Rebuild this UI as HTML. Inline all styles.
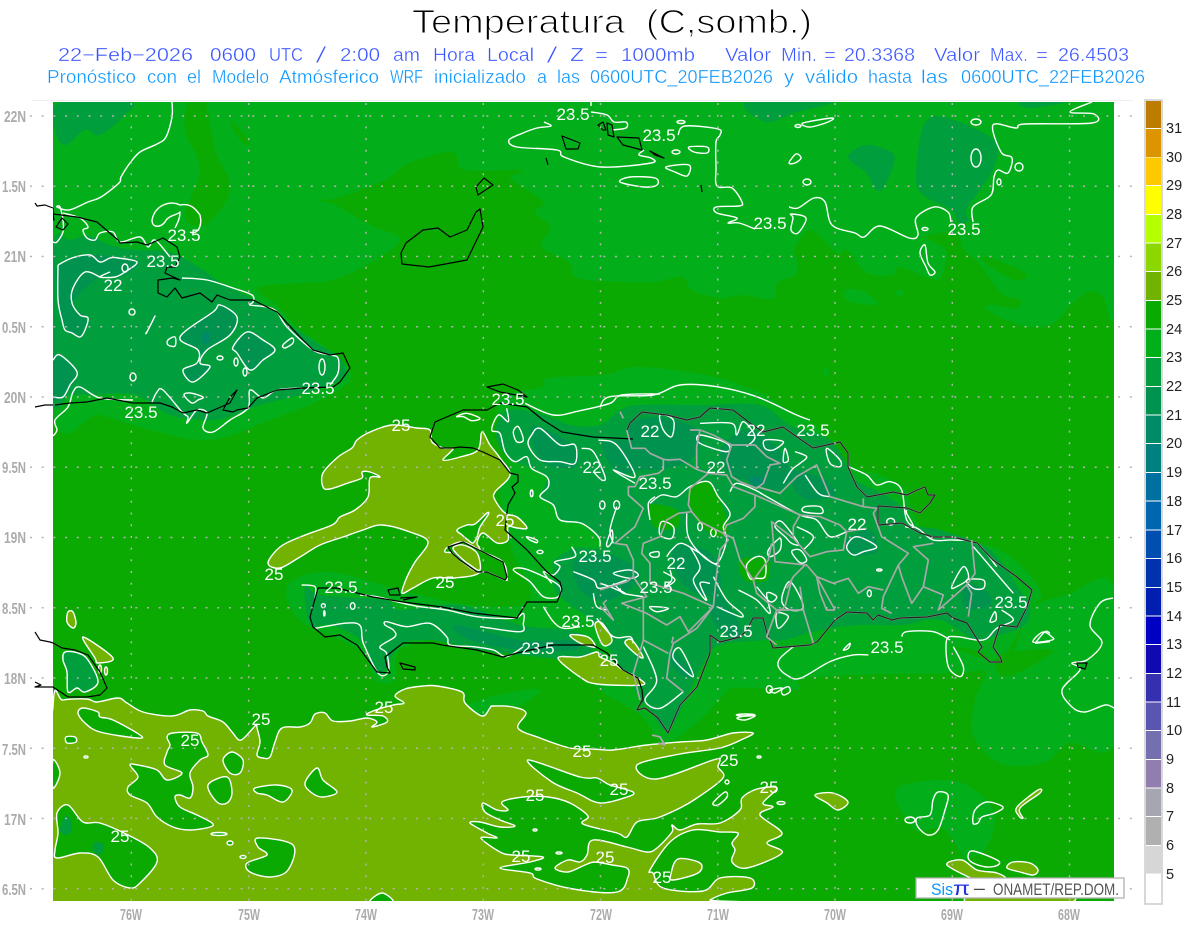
<!DOCTYPE html>
<html><head><meta charset="utf-8"><title>Temperatura</title>
<style>
html,body{margin:0;padding:0;background:#fff}
svg{display:block}
svg *{vector-effect:non-scaling-stroke}
.w{fill:none;stroke:#fff;stroke-width:1.4;stroke-linejoin:round}
.wo{stroke:#fff;stroke-width:1.4;stroke-linejoin:round}
.k{fill:none;stroke:#000;stroke-width:1.2;stroke-linejoin:round}
.g{fill:none;stroke:#a8a8a8;stroke-width:1.7;stroke-linejoin:round}
.ol{fill:#72b200}.gr{fill:#0aaa02}.li{fill:#02af1a}.m{fill:#009e3c}.d{fill:#00934f}.t{fill:#008a68}
.lb text{font:17px "Liberation Sans",sans-serif;fill:#fff;text-anchor:middle}
.ax text{font:bold 16px "Liberation Sans",sans-serif;fill:#ababab}
.cb text{font:14.5px "Liberation Sans",sans-serif;fill:#222}
.s1 text{font:18.5px "Liberation Sans",sans-serif;fill:#3a55ff}
.s2 text{font:18.5px "Liberation Sans",sans-serif;fill:#0a96ff}
</style></head><body>
<svg xmlns="http://www.w3.org/2000/svg" width="1200" height="927" viewBox="0 0 1200 927">
<rect width="1200" height="927" fill="#fff"/>
<!-- titles -->
<g font-family="Liberation Sans,sans-serif" font-size="33" fill="#000" stroke="#fff" stroke-width="1.1">
<text x="412" y="33" textLength="213" lengthAdjust="spacingAndGlyphs">Temperatura</text>
<text x="646" y="33" textLength="166" lengthAdjust="spacingAndGlyphs">(C,somb.)</text>
</g>
<g class="s1" stroke="#fff" stroke-width=".35">
<text x="58" y="61" textLength="135" lengthAdjust="spacingAndGlyphs">22−Feb−2026</text>
<text x="210" y="61" textLength="46" lengthAdjust="spacingAndGlyphs">0600</text>
<text x="269" y="61" textLength="34" lengthAdjust="spacingAndGlyphs">UTC</text>
<text x="315" y="63" textLength="12" lengthAdjust="spacingAndGlyphs" style="font-size:23px" stroke-width=".9">/</text>
<text x="340" y="61" textLength="40" lengthAdjust="spacingAndGlyphs">2:00</text>
<text x="393" y="61" textLength="27" lengthAdjust="spacingAndGlyphs">am</text>
<text x="433" y="61" textLength="42" lengthAdjust="spacingAndGlyphs">Hora</text>
<text x="487" y="61" textLength="47" lengthAdjust="spacingAndGlyphs">Local</text>
<text x="546" y="63" textLength="12" lengthAdjust="spacingAndGlyphs" style="font-size:23px" stroke-width=".9">/</text>
<text x="570" y="61" textLength="14" lengthAdjust="spacingAndGlyphs">Z</text>
<text x="595" y="61" textLength="13" lengthAdjust="spacingAndGlyphs">=</text>
<text x="621" y="61" textLength="74" lengthAdjust="spacingAndGlyphs">1000mb</text>
<text x="725" y="61" textLength="46" lengthAdjust="spacingAndGlyphs">Valor</text>
<text x="781" y="61" textLength="36" lengthAdjust="spacingAndGlyphs">Min.</text>
<text x="824" y="61" textLength="12" lengthAdjust="spacingAndGlyphs">=</text>
<text x="844" y="61" textLength="71" lengthAdjust="spacingAndGlyphs">20.3368</text>
<text x="934" y="61" textLength="46" lengthAdjust="spacingAndGlyphs">Valor</text>
<text x="990" y="61" textLength="38" lengthAdjust="spacingAndGlyphs">Max.</text>
<text x="1036" y="61" textLength="12" lengthAdjust="spacingAndGlyphs">=</text>
<text x="1058" y="61" textLength="71" lengthAdjust="spacingAndGlyphs">26.4503</text>
</g>
<g class="s2" stroke="#fff" stroke-width=".35">
<text x="47" y="83" textLength="89" lengthAdjust="spacingAndGlyphs">Pronóstico</text>
<text x="147" y="83" textLength="30" lengthAdjust="spacingAndGlyphs">con</text>
<text x="187" y="83" textLength="14" lengthAdjust="spacingAndGlyphs">el</text>
<text x="212" y="83" textLength="57" lengthAdjust="spacingAndGlyphs">Modelo</text>
<text x="279" y="83" textLength="100" lengthAdjust="spacingAndGlyphs">Atmósferico</text>
<text x="390" y="83" textLength="33" lengthAdjust="spacingAndGlyphs">WRF</text>
<text x="434" y="83" textLength="92" lengthAdjust="spacingAndGlyphs">inicializado</text>
<text x="537" y="83" textLength="10" lengthAdjust="spacingAndGlyphs">a</text>
<text x="557" y="83" textLength="23" lengthAdjust="spacingAndGlyphs">las</text>
<text x="590" y="83" textLength="183" lengthAdjust="spacingAndGlyphs">0600UTC_20FEB2026</text>
<text x="784" y="83" textLength="10" lengthAdjust="spacingAndGlyphs">y</text>
<text x="805" y="83" textLength="53" lengthAdjust="spacingAndGlyphs">válido</text>
<text x="868" y="83" textLength="44" lengthAdjust="spacingAndGlyphs">hasta</text>
<text x="921" y="83" textLength="27" lengthAdjust="spacingAndGlyphs">las</text>
<text x="961" y="83" textLength="184" lengthAdjust="spacingAndGlyphs">0600UTC_22FEB2026</text>
</g>
<line x1="32" y1="100.5" x2="1133" y2="100.5" stroke="#eee"/>

<svg x="53" y="102" width="1061" height="799" viewBox="53 102 1061 799" overflow="hidden">
<rect x="53" y="102" width="1061" height="799" class="gr"/>
<!-- light north area -->
<polygon class="li" points="53,102 1114,102 1114,310 1102,295 1088,292 1073,303 1051,325 1020,325 987,310 991,305 1016,308 1020,300 1001,293 979,263 964,250 955,233 926,237 946,250 941,277 929,278 900,267 892,275 867,273 847,250 837,253 810,230 794,250 797,260 795,275 777,283 775,297 764,299 744,295 719,298 692,290 682,277 653,282 604,281 575,277 569,262 542,247 550,227 535,213 544,203 532,193 510,178 523,170 465,170 452,152 409,163 385,180 337,198 318,200 335,205 370,225 400,240 370,263 333,280 300,283 257,288 277,305 300,330 340,358 350,380 320,400 270,420 210,440 150,430 100,415 53,410"/>
<polygon class="gr" points="987,257 1026,273 1015,280 985,263"/>
<polygon class="gr" points="189,102 205,102 215,150 230,190 205,225 185,215 200,170 185,130"/>
<polygon class="gr" points="230,120 245,135 250,145 240,140"/>
<polygon class="li" points="845,290 860,290 875,300 875,305 855,303 845,298"/>
<ellipse class="li" cx="900" cy="293" rx="4" ry="3"/>
<ellipse class="li" cx="826" cy="372" rx="3" ry="4"/>
<!-- dark north patches -->
<polygon class="m" points="60,102 130,102 125,115 100,135 85,130 65,145 55,130"/>
<polygon class="m" points="848,157 866,145 891,152 894,163 884,187 876,190 866,173"/>
<polygon class="m" points="916,180 923,127 944,117 994,140 994,167 980,190 966,210 969,220 959,223 951,210 926,197"/>
<polygon class="m" points="746,102 766,122 794,113 830,102"/>
<polygon class="m" points="1020,102 1030,108 1065,102"/>
<!-- Hispaniola halo -->
<polygon class="li" points="505,395 542,387 548,378 604,375 632,367 674,370 719,378 760,393 789,410 815,425 850,465 880,475 905,490 925,530 1000,550 1040,590 1030,610 1000,660 975,650 900,640 800,630 770,650 730,688 700,720 665,742 640,715 600,690 560,650 450,640 400,650 395,680 375,680 360,650 300,620 288,585 330,572 400,590 470,605 530,600 510,545 500,490 510,470 500,440 497,410"/>
<polygon class="li" points="730,688 797,690 800,680 850,675 960,673 985,672 975,700 973,735 1000,763 1043,763 1070,743 1114,742 1114,588 1067,595 1030,610 1000,660 900,630 800,630 720,640 690,700"/>
<polygon class="gr" points="1000,655 1053,650 1020,672 1000,675"/>
<polygon class="li" points="410,735 480,700 540,690 490,720"/>
<polygon class="li" points="896,790 945,780 975,790 995,815 985,850 965,860 975,880 945,830 915,830"/>
<!-- Cuba -->
<polygon class="m" points="53,247 70,240 90,236 110,245 135,250 170,252 200,268 225,285 265,305 290,325 320,345 340,358 345,375 330,385 300,395 260,405 225,418 205,420 170,415 135,395 95,395 70,395 53,400"/>
<polygon class="d" points="58,265 90,255 137,262 120,277 100,277 73,303 87,318 80,337 63,325 58,290"/>
<polygon class="d" points="53,360 60,355 77,372 63,397 53,397"/>
<polygon class="d" points="180,337 213,312 220,305 237,317 230,335 207,350 200,363 210,367 193,382 183,370 197,363 198,350"/>
<polygon class="d" points="233,347 247,332 263,340 275,350 263,360 250,370 237,353"/>
<ellipse class="t" cx="206" cy="338" rx="4" ry="6"/>
<!-- Jamaica -->
<polygon class="m" points="65,652 78,653 88,660 98,682 85,692 77,688 68,692 67,672 63,660"/>
<!-- West Haiti & Hispaniola -->
<polygon class="m" points="305,585 320,595 385,600 400,610 460,605 520,625 570,630 590,640 590,660 570,660 520,655 480,650 430,640 400,645 385,670 375,672 360,640 330,625 310,625"/>
<polygon class="d" points="455,625 520,640 570,640 575,650 520,650 470,640"/>
<polygon class="m" points="508,410 545,415 570,425 600,425 620,410 640,405 700,405 760,405 790,425 830,440 850,470 855,480 885,495 905,510 910,525 940,530 990,550 1020,590 1030,605 1025,625 1000,635 975,640 940,620 900,625 860,625 820,630 785,640 770,640 720,645 705,660 690,690 668,730 650,710 635,690 610,650 590,620 570,605 555,590 553,575 555,560 575,548 600,548 600,537 582,523 560,520 553,505 540,497 547,477 532,468 515,462 505,455 495,432"/>
<polygon class="d" points="530,430 543,428 575,447 575,467 543,462"/>
<polygon class="d" points="603,443 633,443 637,470 615,470"/>
<polygon class="d" points="630,425 665,418 700,432 695,455 680,465 650,470 632,465"/>
<polygon class="d" points="720,450 745,430 770,440 790,470 780,490 745,480 730,475"/>
<polygon class="d" points="790,470 825,480 835,495 810,500 795,490"/>
<polygon class="d" points="845,540 870,530 878,550 865,555 850,555"/>
<polygon class="d" points="672,550 690,545 715,558 720,590 700,595 680,580"/>
<polygon class="d" points="673,650 693,673 685,678 672,665"/>
<polygon class="d" points="575,560 610,555 640,575 610,600 580,590"/>
<polygon class="d" points="715,590 740,625 735,640 712,620"/>
<polygon class="d" points="965,585 985,590 990,605 965,608"/>
<ellipse class="t" cx="757" cy="481" rx="8" ry="5"/>
<polygon class="gr" points="690,487 708,482 720,500 728,530 712,535 690,510"/>
<polygon class="gr" points="650,505 677,510 677,527 655,527"/>
<polygon class="gr" points="740,560 767,560 767,580 745,580"/>

<!-- Olive -->
<polygon class="ol wo" points="53,707 63,700 87,699 97,702 118,698 127,703 143,712 172,716 190,710 203,711 208,716 223,722 232,732 239,740 245,737 256,725 257,728 260,742 257,755 263,758 270,757 275,742 282,728 300,727 310,723 315,714 325,713 333,721 350,721 367,718 377,722 372,727 387,722 383,716 367,715 373,711 393,705 404,703 395,696 405,689 423,686 437,686 462,692 465,703 482,716 490,708 493,706 513,707 526,713 518,728 540,738 570,748 593,749 613,750 647,745 680,742 707,740 733,733 753,733 743,739 720,748 680,754 637,765 656,779 713,760 720,760 718,767 723,778 697,798 680,808 657,818 637,822 627,837 617,833 583,824 588,816 570,803 548,797 523,797 502,802 508,810 497,810 483,803 485,812 500,820 515,826 500,827 480,822 470,823 487,833 497,838 481,838 500,852 513,855 543,857 530,862 500,868 530,873 537,879 573,889 617,892 628,877 627,868 612,865 595,862 585,865 568,872 555,868 568,860 580,862 587,855 593,840 627,847 647,852 657,848 672,832 672,825 680,830 697,824 720,823 740,810 742,798 757,789 777,788 763,803 773,807 760,815 782,833 767,843 782,853 747,868 732,862 735,850 732,843 738,833 720,832 693,830 670,842 650,870 653,873 663,888 703,891 720,878 750,878 752,888 727,893 710,900 710,903 53,903"/>
<!-- holes -->
<g class="gr wo">
<polygon points="78,713 83,708 98,712 100,717 113,720 140,735 137,738 100,732 85,723"/>
<polygon points="66,737 75,737 76,742 67,743"/>
<polygon points="167,737 173,733 197,733 202,742 208,755 200,760 190,773 193,787 190,798 180,795 175,797 180,807 197,815 212,823 210,827 190,830 173,827 157,817 147,803 130,795 128,787 138,777 130,765 138,765 157,770 167,780 182,773 165,765 167,752 170,745"/>
<polygon points="223,760 232,752 243,760 240,773 230,773"/>
<polygon points="208,785 227,777 232,793 227,803 217,802"/>
<polygon points="255,788 277,785 292,790 283,802 267,795 257,793"/>
<polygon points="305,783 317,768 323,780 337,792 323,797 312,793"/>
<polygon points="57,813 68,805 83,822 100,823 128,835 150,848 157,862 140,883 130,888 113,880 98,857 80,853 57,858 55,850 58,833"/>
<polygon points="53,760 60,773 53,788"/>
<polygon points="258,838 293,845 288,870 270,877 250,872 247,863 267,855 258,847"/>
<polygon points="370,902 382,893 393,902"/>
<polygon points="528,760 580,777 597,778 610,785 633,792 627,797 600,803 577,793 552,782"/>
<ellipse cx="219" cy="834" rx="8" ry="1.5"/>
<ellipse cx="230" cy="843" rx="3" ry="2"/>
<ellipse cx="243" cy="857" rx="3" ry="1.5"/>
<ellipse cx="86" cy="757" rx="2" ry="1"/>
</g>
<polygon class="m" points="66,815 72,825 68,835 60,830"/>
<polygon class="m" points="95,842 104,845 100,855 93,850"/>
<polygon class="ol wo" points="678,859 700,863 698,873 673,880 671,874"/>
<polygon class="ol wo" points="815,795 833,793 848,802 838,810 827,803"/>
<polygon class="ol wo" points="947,865 962,860 977,870 997,873 1007,880 1000,890 975,880"/>
<polygon class="ol wo" points="1007,868 1013,862 1030,863 1038,870 1033,875 1020,872"/>
<polygon class="ol wo" points="1017,807 1038,790 1040,793 1020,808 1023,818 1019,816"/>
<polygon class="ol wo" points="970,903 985,890 1060,890 1068,903"/>
<!-- central olive -->
<polygon class="ol wo" points="430,430 417,428 392,425 370,432 357,440 352,448 338,457 323,473 323,487 330,489 348,483 362,478 362,472 370,472 380,477 370,478 368,497 355,510 340,517 332,525 300,537 280,547 268,563 280,568 300,557 320,545 343,537 363,530 382,525 410,532 428,542 415,562 407,577 402,593 413,588 433,578 455,578 480,572 480,550 477,543 483,533 497,543 508,540 508,527 517,528 527,528 517,517 505,513 495,500 495,492 510,475 500,458 490,445 482,432 478,450 460,457 443,460 453,449 443,448 432,442"/>
<polygon class="gr wo" points="457,530 467,525 475,524 487,513 488,515 480,527 477,537 473,543 468,540 462,535"/>
<polygon class="gr wo" points="445,552 452,553 460,560 477,572 487,572 505,580 507,577 503,562 483,552 463,542 448,547"/>
<g class="ol wo">
<polygon points="453,548 463,545 477,553 480,570 470,565 460,557"/>
<polygon points="570,635 588,637 595,647 580,643"/>
<polygon points="595,625 602,623 612,640 603,645"/>
<polygon points="558,658 580,657 597,652 600,657 613,663 623,670 638,678 642,685 597,684 580,677"/>
<polygon points="625,643 632,640 643,657 637,655"/>
<polygon points="68,612 73,612 76,623 73,628 67,622"/>
<polygon points="83,637 113,658 98,663 95,658"/>
<ellipse cx="100" cy="669" rx="1.5" ry="4"/>
<ellipse cx="106" cy="671" rx="1.5" ry="4"/>
</g>

<!-- white contours -->
<g class="w">
<polyline points="172,102 172,117 166,137 157,144 140,152 130,163 121,177 119,183 101,197 88,202 69,210 57,207 60,207 63,220 63,232 57,242 53,242"/>
<polyline points="63,213 80,218 88,227 83,230 87,238 95,240 100,233 113,232 120,242 140,237 148,247 155,240 170,257"/>
<polyline points="182,278 207,280 233,288 252,295 253,302 250,305 267,307 277,312 287,327 313,350 330,355 338,358 338,373 330,385"/>
<polyline points="302,388 277,390 263,398 250,390 248,408 230,420 213,432 203,428 207,413 197,410 187,423 188,417 182,412 163,390 157,392 152,402"/>
<polyline points="133,400 100,398 80,387 73,392 68,407 55,420 57,430 53,436"/>
<path d="M 152,220 C 155,205 170,200 180,205 C 190,203 195,208 200,215 C 203,228 196,235 190,232 M 152,220 C 152,228 160,228 165,222 C 168,215 178,215 180,212 C 180,218 178,222 175,228"/>
<polyline points="58,265 72,258 90,255 100,262 110,258 118,258 137,262 125,272 115,277 100,277 110,272"/>
<polyline points="100,277 85,272 73,288 72,303 80,315 88,318 85,330 80,337 72,333 65,330 62,320 58,300 58,265"/>
<polyline points="53,360 60,355 77,372 70,385 63,397 53,397"/>
<polygon points="180,337 213,312 220,305 237,317 230,335 207,350 200,363 210,367 193,382 183,370 197,363 198,350"/>
<polygon points="233,347 247,332 263,340 275,350 263,360 250,370 237,353"/>
<polygon points="168,340 175,337 175,346 168,345"/>
<polygon points="147,332 155,316 148,330 146,333"/>
<polygon points="184,395 190,393 203,397 198,400 192,403"/>
<ellipse cx="132" cy="312" rx="3" ry="3"/>
<ellipse cx="133" cy="377" rx="3" ry="4"/>
<ellipse cx="125" cy="268" rx="3" ry="4"/>
<polygon points="283,345 292,338 293,343 285,348"/>
<ellipse cx="322" cy="367" rx="3" ry="8"/>
<ellipse cx="236" cy="362" rx="2" ry="4"/>
<ellipse cx="245" cy="372" rx="2" ry="4"/>
<ellipse cx="220" cy="358" rx="3" ry="2"/>
<polygon points="65,652 78,653 88,660 98,682 85,692 77,688 68,692 67,672 63,660"/>
<polyline points="591,102 591,106"/>
<polyline points="591,112 607,115 614,122 626,122 626,128 612,130"/>
<polyline points="544,122 551,126 537,128 523,133 509,140 517,147 557,150 564,157 601,167 651,163 651,158 639,155 644,150"/>
<polygon points="666,167 689,165 687,176 675,172"/>
<polygon points="689,147 707,147 707,153 694,152"/>
<ellipse cx="676" cy="152" rx="4" ry="2"/>
<polygon points="620,182 630,177 655,178 657,185 644,187"/>
<ellipse cx="681" cy="122" rx="4" ry="1.5"/>
<polyline points="678,135 685,126 718,129 720,135 716,142 716,167 717,186 732,188 742,202 739,206 716,207 717,213 737,218 728,223 739,223 755,229"/>
<polygon points="791,214 806,218 798,233 791,230 793,218"/>
<polyline points="789,207 798,208 814,198 825,202 832,225 855,233 864,237 880,226 909,238 918,235 916,218 934,207 948,212 951,222"/>
<polyline points="973,222 973,207 991,195 994,177 998,170 1008,173 1012,158 1001,152 993,125 1016,128 1025,124 1092,123 1094,114 1070,112 1092,102"/>
<circle cx="1019" cy="167" r="4"/>
<polygon points="795,163 801,158 796,154 789,163"/>
<ellipse cx="807" cy="182" rx="4" ry="3"/>
<polygon points="803,123 832,118 828,122 810,127"/>
<ellipse cx="798" cy="126" rx="3" ry="1.5"/>
<ellipse cx="976" cy="158" rx="5" ry="9"/>
<ellipse cx="976" cy="122" rx="5" ry="3"/>
<ellipse cx="999" cy="182" rx="2" ry="3"/>
<ellipse cx="925" cy="229" rx="3" ry="1.5"/>
<polygon points="925,245 928,263 935,272 930,275 926,267 920,253"/>
<polyline points="1113,598 1100,603 1090,625 1102,643 1087,660 1072,663 1080,670 1062,690 1072,707 1085,712 1105,705 1114,708"/>
<polygon points="1033,642 1043,632 1052,637 1052,640"/>
<polygon points="933,800 938,792 948,795 945,810 938,830 928,835 918,827 917,818 930,815"/>
<ellipse cx="910" cy="820" rx="5" ry="3"/>
<polygon points="975,810 987,802 1003,807 995,813 982,817 978,823 973,823"/>
<polygon points="968,857 973,851 997,860 998,865 987,867 973,863"/>
<ellipse cx="727" cy="782" rx="2" ry="2"/>
<polygon points="713,803 725,792 727,797 718,805"/>
<ellipse cx="781" cy="803" rx="4" ry="1.5"/>
<ellipse cx="759" cy="757" rx="2" ry="1"/>
<ellipse cx="535" cy="830" rx="2" ry="1"/>
<ellipse cx="559" cy="853" rx="3" ry="1"/>
<ellipse cx="538" cy="869" rx="3" ry="1"/>
<polygon points="737,718 750,715 755,716 745,720"/>
<polygon points="770,690 782,688 775,693"/>
</g>
<g transform="translate(260,380) scale(.33333)" class="w">
<polyline points="795,70 880,105 960,92 1050,70 1085,45 1200,42"/>
<polygon points="590,110 620,100 660,115 635,122 610,110"/>
<polyline points="740,85 745,125 715,105 695,150 720,160 735,215 765,245 800,230 815,265 860,290 865,320 840,350 880,375 900,420 965,430 1015,470 1020,500"/>
<polygon points="775,140 790,180 770,185 760,155"/>
<polygon points="815,165 840,145 900,195 945,195 945,250 900,245 840,240 805,195"/>
<polyline points="965,205 1000,215 1035,290 1025,300 1000,275"/>
<polyline points="1015,180 1070,195 1125,290 1060,270 1125,310"/>
<ellipse cx="815" cy="340" rx="4" ry="10"/>
<ellipse cx="1027" cy="375" rx="8" ry="12"/>
<ellipse cx="1070" cy="375" rx="9" ry="13"/>
<polygon points="800,470 830,480 830,488 810,480"/>
<ellipse cx="840" cy="516" rx="9" ry="5"/>
<polygon points="1040,490 1055,450 1058,480 1045,500"/>
<polyline points="935,500 945,530 885,545 900,560 880,585 850,575 875,610"/>
<polyline points="940,575 1000,600 1020,625 1100,600"/>
<polygon points="760,570 800,568 895,615 895,650 850,650 810,605"/>
<polyline points="850,680 880,725 910,745 960,740"/>
<polyline points="125,615 165,620 165,655"/>
<polyline points="165,745 290,730 310,790 355,880 385,875 380,820 360,800 405,770 400,750 375,735 380,725 440,740 510,730 560,770 570,795 640,800 700,810 740,830 790,800"/>
<polyline points="660,740 780,755 790,730 790,700 760,715 650,710 560,690 480,680 430,670 350,650 300,645"/>
<polyline points="1010,715 1060,770 1110,770 1120,790"/>
<polyline points="1040,690 1010,680 1000,640"/>
<ellipse cx="278" cy="678" rx="7" ry="10"/>
<circle cx="190" cy="677" r="6"/>
<ellipse cx="193" cy="700" rx="2" ry="8"/>
<polygon points="1060,580 1110,570 1135,585 1110,595"/>
</g>
<g transform="translate(600,380) scale(.33333)" class="w">
<polygon points="180,105 220,120 215,170 190,150"/>
<polyline points="300,130 395,130 410,165 430,125 465,170 440,200"/>
<polygon points="300,165 380,190 380,215 300,190"/>
<polygon points="495,180 550,185 520,210 495,205"/>
<polygon points="555,205 565,240 550,245"/>
<polygon points="680,205 720,240 720,260 690,250"/>
<polyline points="615,285 655,340 690,350"/>
<polygon points="615,380 660,380 665,400 610,395"/>
<polyline points="585,215 620,230 600,250 575,270 550,310"/>
<polyline points="390,335 410,310 465,330 500,350 600,405 650,420 690,470 740,455"/>
<polyline points="150,370 185,345 230,350 270,320 325,305 355,350 390,400 370,440 380,480 350,550 300,520 245,490 215,510 200,530"/>
<polygon points="185,425 220,440 215,475 180,465"/>
<polyline points="150,420 145,370 165,350"/>
<polyline points="260,400 265,470 310,530 360,560"/>
<ellipse cx="300" cy="440" rx="7" ry="12"/>
<ellipse cx="340" cy="458" rx="8" ry="12"/>
<polygon points="525,440 545,425 595,490 575,490 555,470"/>
<polygon points="505,510 540,475 540,510 510,530"/>
<polygon points="575,515 600,510 620,540 600,548"/>
<polyline points="590,440 640,470 610,510"/>
<polygon points="440,555 470,530 495,540 495,590 470,595 450,595"/>
<polyline points="415,630 470,660 510,700 500,640 530,650 510,665 470,620"/>
<polygon points="545,660 570,605 610,680 570,690"/>
<polygon points="530,700 565,710 535,745"/>
<polygon points="740,500 770,470 830,500 790,515 760,525"/>
<polygon points="150,520 175,515 175,530 155,530"/>
<polyline points="190,575 225,600 190,625 215,600 210,570"/>
<polyline points="270,500 300,560 280,600 300,640 320,660 300,610 330,610"/>
<polyline points="340,590 380,660 425,700 420,710 350,680"/>
<polyline points="60,625 70,640 130,650"/>
<polygon points="150,680 205,685 170,695"/>
<polyline points="0,610 30,620 75,640 60,630 40,610"/>
<polyline points="130,800 170,900 135,960 180,985 250,935"/>
<polygon points="220,835 240,805 280,890"/>
<polyline points="50,380 30,450 40,490"/>
<ellipse cx="808" cy="640" rx="6" ry="10"/>
<ellipse cx="838" cy="570" rx="8" ry="3"/>
<polygon points="1055,620 1090,560 1105,595 1070,620"/>
<polygon points="1100,600 1150,600 1150,625 1120,625"/>
<polyline points="1240,640 1180,570 1120,500"/>
<polyline points="1205,690 1240,720 1190,745 1150,780 1070,770 1040,780 1045,860 1080,890 1090,860 1060,800"/>
<polygon points="1170,725 1185,695 1188,720"/>
<polygon points="730,810 750,790 745,805"/>
<polyline points="805,825 760,825 690,845 600,895 560,885 535,860 540,835 580,800"/>
<polyline points="905,770 920,755 1000,755 1050,780"/>
<polyline points="915,440 940,440 920,400 920,390"/>
<ellipse cx="872" cy="425" rx="12" ry="10"/>
<ellipse cx="508" cy="928" rx="9" ry="11"/>
<polygon points="545,930 565,920 570,935 550,945"/>
<ellipse cx="437" cy="1005" rx="28" ry="3"/>
<polyline points="745,260 800,285 830,315 870,305 905,330 920,420 960,450 1000,480 1060,480 1130,490 1190,560"/>
<polyline points="0,80 30,50 160,45 240,15 350,20 470,50 590,105 630,120"/>
<polyline points="1305,790 1335,755 1350,760"/>
<polyline points="1305,790 1350,785"/>
</g>

<!-- coast -->
<g class="k">
<polyline points="53,208 53,214 77,217 97,222 118,240 120,243 137,242 147,245 163,238 177,247 180,257 175,267 167,267 165,273 180,280 173,278 158,280 158,293 167,297 175,288 182,298 200,293 212,302 217,295 230,300 253,300 263,305 277,312 287,323 300,337 313,350 330,355 343,353 350,368 340,382 333,387 303,388 277,390 257,398 248,408 237,410 233,412 223,410 230,397 237,390 230,403 207,413 197,410 183,413 172,407 160,403 133,403 107,398 87,402 70,403 55,405"/>
<polygon points="53,214 48,215 54,220"/>
<polygon points="62,218 68,224 63,230 56,227"/>
<polygon points="480,209 483,227 467,260 429,267 402,264 401,253 406,243 423,230 438,228 450,237 467,230 476,212"/>
<polygon points="484,178 493,185 478,195 476,187"/>
<polygon points="562,136 580,143 578,149 566,149"/>
<line x1="546" y1="158" x2="548" y2="165"/>
<polygon points="598,125 603,122 606,130 603,130"/>
<polygon points="607,123 612,125 614,137 608,135"/>
<polygon points="617,137 639,138 642,150 623,145"/>
<polygon points="650,151 664,158 655,155"/>
<line x1="701" y1="185" x2="702" y2="192"/>
<polygon points="1077,663 1087,663 1085,669 1078,667"/>
<polyline points="53,643 62,648 75,650 88,655 100,672 107,688 100,695 87,697 68,697 53,687"/>
<polygon points="487,387 503,384 518,390 527,397 500,392"/>
<polygon points="448,547 463,542 483,552 503,562 507,577 505,580 487,572 477,572 460,560 452,553"/>
<polygon points="400,663 415,667 415,670 403,669"/>
<polygon points="388,590 398,588 400,595 390,595"/>
<polyline points="400,598 417,597 403,600"/>
<polyline points="310,617 318,588 337,588 373,597 403,602 442,607 473,613 517,618 527,602 557,602 562,590 560,582 547,572 527,550 505,530 508,505 515,493 512,487 518,482 518,475 510,473 500,460 483,452 473,448 460,447 453,448 440,448 430,437 435,422 463,410 487,410 500,403 527,407 543,420 562,432 593,437 633,439"/>
<polyline points="310,617 313,627 325,637 340,635 357,645 377,672 390,673 387,667 385,657 403,643 433,643 442,645 477,650 503,657 517,653 553,645 593,645 607,653 623,670 638,678 642,690 643,700 637,710"/>
</g>
<polyline class="g" points="627,430 630,423 642,412 667,415 687,420 700,417 710,408 733,410 750,423 763,432 783,427 797,437 813,448 827,445 840,442 848,453 848,467 857,487 867,497 893,492 907,495 917,490 925,487 928,495 935,495 930,503 920,513 907,508 878,506 878,525 902,523 920,533 933,537 953,537 977,543 993,560 1017,577 1032,590 1027,607 1017,627 1000,625 993,647 1000,657 1002,662 990,662 978,652 982,647 967,623 953,618 947,613 927,617 900,618 892,620 878,615 873,620 867,613 847,612 835,620 817,642 810,645 773,648 770,640 767,633 763,618 753,618 747,630 740,637 720,642 710,635 710,653 697,687 680,705 668,733 658,718 645,708 637,710 642,700"/>
<polyline class="k" stroke-opacity=".8" points="627,430 630,423 642,412 667,415 687,420 700,417 710,408 733,410 750,423 763,432 783,427 797,437 813,448 827,445 840,442 848,453 848,467 857,487 867,497 893,492 907,495 917,490 925,487 928,495 935,495 930,503 920,513 907,508 878,506 878,525 902,523 920,533 933,537 953,537 977,543 993,560 1017,577 1032,590 1027,607 1017,627 1000,625 993,647 1000,657 1002,662 990,662 978,652 982,647 967,623 953,618 947,613 927,617 900,618 892,620 878,615 873,620 867,613 847,612 835,620 817,642 810,645 773,648 770,640 767,633 763,618 753,618 747,630 740,637 720,642 710,635 710,653 697,687 680,705 668,733 658,718 645,708 637,710 642,700"/>
<polyline class="g" points="652,735 660,737 665,745 658,743"/>
<!-- province borders -->
<g transform="translate(600,380) scale(.33333)" class="g">
<polyline points="80,150 95,205 135,205 150,220 190,238 205,240 240,238 290,268 290,200 300,150"/>
<polyline points="190,238 190,268 175,280 120,290 105,320 85,320 85,345 130,385 105,440 45,490 80,495 100,540 100,590 80,605 0,630"/>
<polyline points="270,150 300,150 340,165 395,195 380,240 395,290 420,305 470,325 490,310 510,255 540,250 500,230 465,195 395,195"/>
<polyline points="290,268 325,280 380,285 400,320 465,345 465,380 430,415 380,435 370,460 300,425 275,395 235,400 200,420 180,470 130,490 125,520 150,550 150,610"/>
<polyline points="325,280 270,325 265,375 275,395"/>
<polyline points="465,345 600,405 660,410 720,435 740,455 730,510 680,515 630,530 580,475 515,425 525,545 620,555 650,590 705,690"/>
<polyline points="600,405 580,440 580,475"/>
<polyline points="470,320 540,340 590,290 650,255 690,350 790,380 830,385 820,400 845,470 925,520 895,555 850,650 845,685 875,700"/>
<polyline points="790,380 790,355"/>
<polyline points="740,455 800,445"/>
<polyline points="895,555 905,590 935,670 970,620 985,540 940,500 1000,490"/>
<polyline points="615,555 580,590 560,625"/>
<polyline points="650,590 660,640 680,690 705,690"/>
<polyline points="650,590 700,610 745,595 775,640 805,620 850,630"/>
<polyline points="970,620 1030,645 1015,690 1100,615 1115,640 1105,710"/>
<polyline points="1115,480 1125,580 1100,615"/>
<polyline points="370,460 400,475 420,540 460,600 470,640 530,690 500,770 530,795"/>
<polyline points="350,580 360,510 385,480 370,460"/>
<polyline points="350,580 340,680 290,745 220,790 210,820 200,895 250,935"/>
<polyline points="340,680 250,640 150,610"/>
<polyline points="100,590 140,650 65,670 140,700 200,735 240,710 265,755 340,680"/>
<polyline points="130,780 205,820"/>
<polyline points="220,770 215,790"/>
<polyline points="515,490 505,540 460,600"/>
<polyline points="530,690 610,690 640,790"/>
<polyline points="575,600 555,680 530,700"/>
<polyline points="600,620 610,690"/>
<polyline points="60,95 70,115"/>
<polyline points="20,660 10,670 40,720 0,680"/>
<polyline points="130,650 130,780 100,880 120,960"/>
</g>

<!-- labels -->
<g class="lb">
<text x="573" y="120">23.5</text><text x="659" y="141">23.5</text><text x="770" y="229">23.5</text><text x="964" y="235">23.5</text><text x="184" y="241">23.5</text><text x="163" y="267">23.5</text><text x="318" y="394">23.5</text><text x="141" y="418">23.5</text><text x="508" y="405">23.5</text><text x="813" y="436">23.5</text><text x="655" y="489">23.5</text><text x="595" y="562">23.5</text><text x="656" y="593">23.5</text><text x="341" y="593">23.5</text><text x="578" y="627">23.5</text><text x="538" y="654">23.5</text><text x="736" y="637">23.5</text><text x="887" y="653">23.5</text><text x="1011" y="608">23.5</text>
<text x="113" y="291">22</text><text x="650" y="437">22</text><text x="756" y="436">22</text><text x="592" y="473">22</text><text x="716" y="473">22</text><text x="857" y="530">22</text><text x="676" y="569">22</text>
<text x="401" y="431">25</text><text x="274" y="580">25</text><text x="505" y="526">25</text><text x="445" y="588">25</text><text x="609" y="666">25</text><text x="384" y="713">25</text><text x="261" y="725">25</text><text x="190" y="746">25</text><text x="582" y="757">25</text><text x="729" y="766">25</text><text x="619" y="795">25</text><text x="769" y="793">25</text><text x="535" y="801">25</text><text x="120" y="842">25</text><text x="521" y="862">25</text><text x="605" y="863">25</text><text x="662" y="883">25</text>
</g>
</svg>

<!-- coast stubs outside the plot -->
<g class="k">
<polyline points="35,203 37,206 45,205 53,208"/>
<polyline points="35,407 45,405 53,405"/>
<polyline points="35,632 40,640 50,642 53,643"/>
<polyline points="35,682 41,685 35,687 40,687 53,687"/>
</g>

<!-- grid -->
<g fill="none" stroke="#b4b4b0" stroke-width="1.5" stroke-dasharray="2 9.7">
<path d="M30 116H1133M30 186.2H1133M30 256.5H1133M30 326.7H1133M30 397H1133M30 467.2H1133M30 537.5H1133M30 607.7H1133M30 678H1133M30 748.2H1133M30 818.5H1133M30 888.7H1133"/>
<path d="M131.3 103V905M248.7 103V905M366 103V905M483.3 103V905M600.5 103V905M717.8 103V905M835 103V905M952.3 103V905M1069.5 103V905"/>
</g>

<!-- axes -->
<g class="ax">
<text x="4" y="122" textLength="22" lengthAdjust="spacingAndGlyphs">22N</text>
<text x="2" y="192" textLength="24" lengthAdjust="spacingAndGlyphs">1.5N</text>
<text x="4" y="262" textLength="22" lengthAdjust="spacingAndGlyphs">21N</text>
<text x="2" y="333" textLength="24" lengthAdjust="spacingAndGlyphs">0.5N</text>
<text x="4" y="403" textLength="22" lengthAdjust="spacingAndGlyphs">20N</text>
<text x="2" y="473" textLength="24" lengthAdjust="spacingAndGlyphs">9.5N</text>
<text x="4" y="543" textLength="22" lengthAdjust="spacingAndGlyphs">19N</text>
<text x="2" y="614" textLength="24" lengthAdjust="spacingAndGlyphs">8.5N</text>
<text x="4" y="684" textLength="22" lengthAdjust="spacingAndGlyphs">18N</text>
<text x="2" y="755" textLength="24" lengthAdjust="spacingAndGlyphs">7.5N</text>
<text x="4" y="825" textLength="22" lengthAdjust="spacingAndGlyphs">17N</text>
<text x="2" y="895" textLength="24" lengthAdjust="spacingAndGlyphs">6.5N</text>
<text x="120" y="920" textLength="22" lengthAdjust="spacingAndGlyphs">76W</text>
<text x="238" y="920" textLength="22" lengthAdjust="spacingAndGlyphs">75W</text>
<text x="355" y="920" textLength="22" lengthAdjust="spacingAndGlyphs">74W</text>
<text x="472" y="920" textLength="22" lengthAdjust="spacingAndGlyphs">73W</text>
<text x="590" y="920" textLength="22" lengthAdjust="spacingAndGlyphs">72W</text>
<text x="707" y="920" textLength="22" lengthAdjust="spacingAndGlyphs">71W</text>
<text x="824" y="920" textLength="22" lengthAdjust="spacingAndGlyphs">70W</text>
<text x="941" y="920" textLength="22" lengthAdjust="spacingAndGlyphs">69W</text>
<text x="1058" y="920" textLength="22" lengthAdjust="spacingAndGlyphs">68W</text>
</g>

<!-- colorbar -->
<rect x="1145" y="100" width="17" height="804" fill="#fff" stroke="#ccc" stroke-width="1.5"/>
<g>
<rect x="1146" y="101" width="15" height="27" fill="#bb7c00"/>
<rect x="1146" y="129" width="15" height="28" fill="#dc9400"/>
<rect x="1146" y="157.500" width="15" height="27.500" fill="#ffc800"/>
<rect x="1146" y="186" width="15" height="28" fill="#ffff00"/>
<rect x="1146" y="215" width="15" height="27.500" fill="#b4ff00"/>
<rect x="1146" y="243.500" width="15" height="27.500" fill="#8cd700"/>
<rect x="1146" y="272" width="15" height="28" fill="#72b200"/>
<rect x="1146" y="301" width="15" height="27.500" fill="#0aaa02"/>
<rect x="1146" y="329.500" width="15" height="27.500" fill="#02af1a"/>
<rect x="1146" y="358" width="15" height="28" fill="#009e3c"/>
<rect x="1146" y="387" width="15" height="27.500" fill="#00934f"/>
<rect x="1146" y="415.500" width="15" height="27.500" fill="#008a68"/>
<rect x="1146" y="444" width="15" height="28" fill="#008080"/>
<rect x="1146" y="473" width="15" height="27.500" fill="#0070a0"/>
<rect x="1146" y="501.500" width="15" height="28" fill="#0066b0"/>
<rect x="1146" y="530.500" width="15" height="27.500" fill="#004eb0"/>
<rect x="1146" y="559" width="15" height="28" fill="#0032b0"/>
<rect x="1146" y="588" width="15" height="27.500" fill="#001eb0"/>
<rect x="1146" y="616.500" width="15" height="27.500" fill="#0000c4"/>
<rect x="1146" y="645" width="15" height="28" fill="#1008b0"/>
<rect x="1146" y="674" width="15" height="27.500" fill="#3430b0"/>
<rect x="1146" y="702.500" width="15" height="27.500" fill="#5a55b0"/>
<rect x="1146" y="731" width="15" height="28" fill="#7470b0"/>
<rect x="1146" y="760" width="15" height="27.500" fill="#927db0"/>
<rect x="1146" y="788.500" width="15" height="27.500" fill="#a6a6b0"/>
<rect x="1146" y="817" width="15" height="28" fill="#b0b0b0"/>
<rect x="1146" y="846" width="15" height="27.500" fill="#d6d6d6"/>
</g>
<g class="cb">
<text x="1166" y="133">31</text><text x="1166" y="162">30</text><text x="1166" y="190">29</text><text x="1166" y="219">28</text><text x="1166" y="248">27</text><text x="1166" y="276">26</text><text x="1166" y="305">25</text><text x="1166" y="334">24</text><text x="1166" y="362">23</text><text x="1166" y="391">22</text><text x="1166" y="420">21</text><text x="1166" y="448">20</text><text x="1166" y="477">19</text><text x="1166" y="506">18</text><text x="1166" y="535">17</text><text x="1166" y="563">16</text><text x="1166" y="592">15</text><text x="1166" y="621">14</text><text x="1166" y="649">13</text><text x="1166" y="678">12</text><text x="1166" y="707">11</text><text x="1166" y="735">10</text><text x="1166" y="764">9</text><text x="1166" y="793">8</text><text x="1166" y="821">7</text><text x="1166" y="850">6</text><text x="1166" y="879">5</text>
</g>

<!-- legend box -->
<rect x="916" y="878" width="208" height="20" fill="#fff" stroke="#b0b0b0" stroke-width="1.3"/>
<g font-family="Liberation Sans,sans-serif">
<text x="931" y="895" font-size="17" fill="#0a96ff" textLength="22" lengthAdjust="spacingAndGlyphs">Sis</text>
<text x="953" y="895" font-size="19" fill="#2233dd" textLength="17" lengthAdjust="spacingAndGlyphs">π</text>
<text x="973" y="895" font-size="17" fill="#444" textLength="13" lengthAdjust="spacingAndGlyphs">−</text>
<text x="993" y="895" font-size="17" fill="#555" textLength="126" lengthAdjust="spacingAndGlyphs">ONAMET/REP.DOM.</text>
</g>
</svg>
<script>
(function(){
var ns='http://www.w3.org/2000/svg';
var els=document.querySelectorAll('svg polygon, svg polyline');
for(var i=0;i<els.length;i++){
  var e=els[i];
  if(e.closest('.k,.g')||e.classList.contains('k')||e.classList.contains('g'))continue;
  var pts=[],l=e.points,closed=e.tagName.toLowerCase()==='polygon';
  for(var j=0;j<l.numberOfItems;j++){var p=l.getItem(j);pts.push([p.x,p.y]);}
  var n=pts.length;if(n<3)continue;
  var g=function(k){return closed?pts[(k+n)%n]:pts[Math.max(0,Math.min(n-1,k))];};
  var d='M'+pts[0][0]+' '+pts[0][1];
  var m=closed?n:n-1;
  for(var k=0;k<m;k++){
    var a=g(k-1),b=g(k),c=g(k+1),f=g(k+2);
    d+='C'+(b[0]+(c[0]-a[0])/6).toFixed(1)+' '+(b[1]+(c[1]-a[1])/6).toFixed(1)+' '+(c[0]-(f[0]-b[0])/6).toFixed(1)+' '+(c[1]-(f[1]-b[1])/6).toFixed(1)+' '+c[0]+' '+c[1];
  }
  if(closed)d+='Z';
  var q=document.createElementNS(ns,'path');
  q.setAttribute('d',d);
  if(e.getAttribute('class'))q.setAttribute('class',e.getAttribute('class'));
  e.parentNode.replaceChild(q,e);
}
})();
</script>
</body></html>
